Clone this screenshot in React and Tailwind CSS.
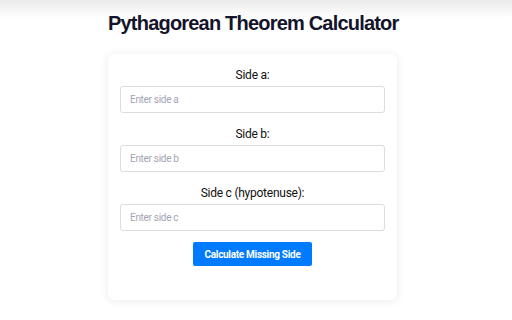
export default function App() {
  const fields = [
    { id: 'a', label: 'Side a:', placeholder: 'Enter side a' },
    { id: 'b', label: 'Side b:', placeholder: 'Enter side b' },
    { id: 'c', label: 'Side c (hypotenuse):', placeholder: 'Enter side c' },
  ]

  return (
    <div className="w-[512px] h-[320px] overflow-hidden bg-[linear-gradient(to_bottom,#ebebeb,#ffffff_18px)] font-['Roboto',sans-serif]">
      <div className="w-[289px] ml-[108px] pt-[11px]">
        <h1 className="text-center whitespace-nowrap font-['Liberation_Sans',Arial,sans-serif] font-bold text-[20px] leading-[24px] tracking-[-0.8px] text-[#14142b]">
          Pythagorean Theorem Calculator
        </h1>
        <div className="mt-[19px] h-[246px] bg-white rounded-[6px] shadow-[0_1px_8px_rgba(0,0,0,0.09)] px-3 pt-[13px] flex flex-col">
          {fields.map((f) => (
            <div key={f.id} className="flex flex-col mb-[13px]">
              <label className="text-center text-[12px] leading-[16px] tracking-[-0.25px] text-[#111] mb-[3px]">
                {f.label}
              </label>
              <input
                type="text"
                placeholder={f.placeholder}
                className="h-[27px] w-full rounded-[3px] border border-[#dcdce0] px-[9px] text-[10px] tracking-[-0.3px] placeholder:text-[#a3a3b3] outline-none"
              />
            </div>
          ))}
          <div className="flex justify-center -mt-[2px]">
            <button
              type="button"
              className="h-[24px] px-[12px] rounded-[2px] bg-[#007bff] text-white font-bold text-[10px] tracking-[-0.3px]"
            >
              Calculate Missing Side
            </button>
          </div>
        </div>
      </div>
    </div>
  )
}
